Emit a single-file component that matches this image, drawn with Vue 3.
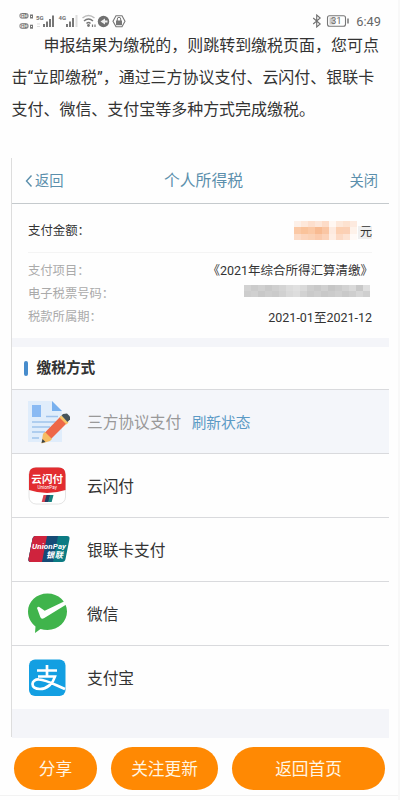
<script setup>
const details = [
  { label: '支付项目：', value: '《2021年综合所得汇算清缴》', kind: 'quoted' },
  { label: '电子税票号码：', value: '', kind: 'masked' },
  { label: '税款所属期：', value: '2021-01至2021-12', kind: 'plain' },
]
const methods = [
  { id: 'agreement', name: '三方协议支付', action: '刷新状态' },
  { id: 'quickpass', name: '云闪付' },
  { id: 'unionpay', name: '银联卡支付' },
  { id: 'wechat', name: '微信' },
  { id: 'alipay', name: '支付宝' },
]
const amountMask = [
  '#fdf0e8', '#fee8da', '#fddfcd', '#fde6d8', '#fddcc8', '#fff7f2', '#fde8da', '#fde2d0', '#fdeadf',
  '#fbc9a6', '#fac39b', '#fbc8a4', '#f8bb92', '#fac6a4', '#fdeadf', '#fcd0b2', '#fbd0b5', '#fef2ea',
  '#fcdcc8', '#fcd5bd', '#fbd2b6', '#fbcbad', '#fcd3ba', '#feeee4', '#fcdac5', '#fde3d3', '#fffaf7',
]
const codeMask = [
  '#d2d2d2', '#cbcbcb', '#d0d0d0', '#c9c9c9', '#cfcfcf', '#d4d4d4', '#dcdcdc', '#e0e0e0', '#dadada', '#cecece', '#c9c9c9', '#d0d0d0', '#c6c6c6', '#cbcbcb', '#d2d2d2', '#d9d9d9', '#c8c8c8', '#dedede',
  '#cdcdcd', '#d0d0d0', '#c8c8c8', '#cdcdcd', '#cacaca', '#d1d1d1', '#d9d9d9', '#dddddd', '#d2d2d2', '#cacaca', '#cecece', '#c8c8c8', '#cbcbcb', '#cfcfcf', '#c9c9c9', '#cecece', '#d6d6d6', '#cfcfcf',
]
</script>

<template>
  <div class="screen">
    <header class="status">
      <svg class="signals" width="112" height="20" viewBox="0 0 112 20">
        <g fill="none" stroke="#777" stroke-width="1">
          <rect x="1" y="4.500" width="8" height="4.600" rx="1.500" />
          <rect x="1" y="14.700" width="8" height="4.600" rx="1.500" />
          <rect x="11.500" y="6" width="2" height="3" />
          <rect x="11.500" y="16.200" width="2" height="3" />
        </g>
        <g class="tiny">
          <text x="2" y="8.700" font-size="4.800">HD</text>
          <text x="2" y="18.900" font-size="4.800">HD</text>
          <text x="17" y="10.500" font-size="6">5G</text>
          <text x="39.500" y="10.500" font-size="6">4G</text>
        </g>
        <g fill="#777">
          <path d="M24 15h2v3h-2zM27 12.500h2V18h-2zM30 10h2v8h-2zM33 6.500h2V18h-2z" />
          <path d="M47 15h2v3h-2zM50 12.500h2V18h-2zM53 9h2v9h-2z" />
        </g>
        <path d="M57.500 6v12" stroke="#ddd" stroke-width="2" />
        <path d="M18 15h3M18 17.500h3" stroke="#ddd" />
        <g fill="none" stroke="#777" stroke-width="1.500">
          <path d="M63.500 9q6-5 12 0" stroke="#bbb" />
          <path d="M65 12q4.500-4 9 0M67.500 14.500q2-2 4 0" />
          <path d="M73.500 15.500v2.500M76 15.500v2.500" stroke-width="1.200" />
        </g>
        <circle cx="69.500" cy="16.500" r="1.400" fill="#777" />
        <circle cx="84.500" cy="12.500" r="5.700" fill="#707070" />
        <path d="M81.500 12.500l4.500-3v2h2.500v2H86v2z" fill="#eee" />
        <path d="M97 6.800h6l3 5.500-3 5.500h-6l-3-5.500z" fill="none" stroke="#777" stroke-width="1.100" />
        <path d="M97 11.500h6v4.700h-6z" fill="#777" />
        <path d="M98.300 12V10a1.700 1.700 0 0 1 3.400 0v2" fill="none" stroke="#777" />
      </svg>
      <div class="power">
        <svg width="40" height="14" viewBox="0 0 40 14">
          <path d="M1.200 4l7 6-3.500 3V1l3.500 3-7 6" fill="none" stroke="#707070" stroke-width="1.100" />
          <rect x="15.500" y="1.800" width="18" height="10.400" rx="2" fill="none" stroke="#777" stroke-width="1.100" />
          <rect x="17.500" y="3.500" width="5" height="7" fill="#c9c9c9" />
          <path d="M36 4.500v5" stroke="#777" stroke-width="1.500" />
          <text class="battery" x="19" y="10.300">31</text>
        </svg>
        <span class="time">6:49</span>
      </div>
    </header>

    <p class="intro">申报结果为缴税的，则跳转到缴税页面，您可点击“立即缴税”，通过三方协议支付、云闪付、银联卡支付、微信、支付宝等多种方式完成缴税。</p>

    <main class="panel">
      <nav class="nav">
        <span class="back">
          <svg width="8" height="12" viewBox="0 0 8 12"><path d="M6.500 .5L1.500 6l5 5.500" fill="none" stroke="#5b8fac" stroke-width="1.400" /></svg>
          返回
        </span>
        <span class="title">个人所得税</span>
        <span class="close">关闭</span>
      </nav>

      <section class="summary">
        <div class="amount">
          <span class="caption">支付金额：</span>
          <span class="sum">
            <span class="mask amount-mask"><i v-for="(c, i) in amountMask" :key="i" :style="{ background: c }" /></span>
            <span class="yuan">元</span>
          </span>
        </div>
        <div v-for="d in details" :key="d.label" class="detail">
          <span class="label">{{ d.label }}</span>
          <span v-if="d.kind === 'masked'" class="mask code-mask"><i v-for="(c, i) in codeMask" :key="i" :style="{ background: c }" /></span>
          <span v-else :class="['value', d.kind]">{{ d.value }}</span>
        </div>
      </section>

      <h2 class="heading"><i class="bar" />缴税方式</h2>

      <ul class="methods">
        <li v-for="m in methods" :key="m.id" :class="['method', m.id]">
          <svg v-if="m.id === 'agreement'" class="icon" viewBox="0 0 44 44">
            <path d="M0 1h24l10 10v31H0z" fill="#e0edfb" />
            <path d="M24 1v10h10z" fill="#78b0ee" />
            <path d="M4 5h9v12H4z" fill="#8abaf3" />
            <path d="M18 16.500h12M4 22h24M4 27h18M4 32h13M4 38h7" stroke="#9fc3ec" stroke-width="1.300" />
            <path d="M15.500 34L33 16l6.500 6.500L22 40z" fill="#ee6848" />
            <path d="M15 34l2-2 7 7-2 2-8.500 2.500z" fill="#f6bd62" />
            <path d="M13.500 43l1-4 3 3z" fill="#384247" />
            <path d="M31.500 17.500l2-2 7 7-2 2z" fill="#f7c567" />
            <path d="M33.500 15.500l1.500-1.500 4-.5 3 3v3l-2.500 2.500z" fill="#46545a" />
          </svg>
          <svg v-else-if="m.id === 'quickpass'" class="icon" viewBox="0 0 44 44">
            <rect x="1" y="3.500" width="36.500" height="36.500" rx="7" fill="#fff" stroke="#ddd" stroke-width=".8" />
            <path d="M1 26V10.500q0-7 7-7h22.500q7 0 7 7V26q-18.500 6-36.500 0z" fill="#e22c30" />
            <text class="cn" x="19.200" y="19" font-size="10.600" text-anchor="middle">云闪付</text>
            <text class="en thin" x="19.200" y="25" font-size="4.600" text-anchor="middle">UnionPay</text>
            <path d="M15.500 31h4l-1.800 7h-4z" fill="#d74350" />
            <path d="M18.500 31h4l-1.800 7h-4z" fill="#233f63" />
            <path d="M22 31h3.500l-1.800 7h-3.500z" fill="#16817f" />
          </svg>
          <svg v-else-if="m.id === 'unionpay'" class="icon" viewBox="0 0 44 44">
            <path d="M8 8h31q3 0 2.500 3l-4 20q-.5 3-3.500 3H3q-3 0-2.500-3l4-20Q5 8 8 8z" fill="#0b7b83" />
            <path d="M8 8h22l-5 26H3q-3 0-2.500-3l4-20Q5 8 8 8z" fill="#164b76" />
            <path d="M8 8h11l-5 26H3q-3 0-2.500-3l4-20Q5 8 8 8z" fill="#cf233d" />
            <text class="en" x="4" y="21" font-size="8" textLength="34">UnionPay</text>
            <text class="cn slant" x="18" y="30.300" font-size="8.200" textLength="17">银联</text>
          </svg>
          <svg v-else-if="m.id === 'wechat'" class="icon" viewBox="0 0 44 44">
            <path d="M19.500 1.500c11 0 19.500 8 19.500 18s-8.500 18.500-19.500 18.500q-3.500 0-7-1l-5.500 4 .5-6.500C3 31 0 25.500 0 19.500c0-10 8.500-18 19.500-18z" fill="#40b44c" />
            <path d="M9 16q1.200-2 2.700-.8l5 3.500L36.500 9.200l1.800 3.300-22 13.500q-3 2-4-1z" fill="#fff" />
          </svg>
          <svg v-else class="icon" viewBox="0 0 44 44">
            <rect x="1" y="3.500" width="36.500" height="36.500" rx="6" fill="#139fe2" />
            <path d="M9 14.500h20M19 9v11M10 20.500h17c-2 7-8 12.500-15 12.500-5 0-7.500-2-7.500-5 0-3 3-4.800 6.500-4.500 8 .5 16 5.500 26 9.500" fill="none" stroke="#fff" stroke-width="2.700" />
          </svg>
          <span class="name">{{ m.name }}</span>
          <span v-if="m.action" class="action">{{ m.action }}</span>
        </li>
      </ul>
      <div class="filler" />
    </main>

    <footer class="actions">
      <button class="share">分享</button>
      <button class="follow">关注更新</button>
      <button class="home">返回首页</button>
    </footer>
  </div>
</template>

<style>
body { margin: 0; background: #fdfdfd; }
</style>

<style scoped>
* { box-sizing: border-box; }
.screen {
  width: 400px;
  height: 800px;
  overflow: hidden;
  display: flex;
  flex-direction: column;
  background: #fefefe;
  border-right: 2px solid #f8f8f8;
  color: #333;
  font-family: Roboto, "Noto Sans CJK SC", sans-serif;
}
.status {
  height: 30px;
  padding: 9px 17px 0 19px;
  display: flex;
  justify-content: space-between;
  flex: none;
}
.tiny { fill: #707070; font-weight: 700; }
.power { display: flex; gap: 4px; padding-top: 5px; height: 19px; align-items: flex-start; }
.battery { font-size: 9.500px; fill: #666; }
.time { font-size: 12.800px; line-height: 15px; color: #666; }
.intro {
  margin: 0;
  padding-left: 11.500px;
  width: 384px;
  height: 128px;
  flex: none;
  font-size: 15.970px;
  line-height: 32px;
  text-indent: 32px;
  color: #333;
}
.panel {
  width: 378px;
  height: 579px;
  margin-left: 11px;
  flex: none;
  border-left: 1px solid #ddd;
}
.nav {
  height: 46px;
  padding: 0 11px 0 13px;
  border-bottom: 1px solid #c5cacd;
  display: grid;
  grid-template-columns: 1fr auto 1fr;
  align-items: center;
  color: #5b8fac;
  font-size: 14.300px;
  line-height: 46px;
}
.back { display: flex; align-items: center; gap: 2px; }
.title { font-size: 15.800px; padding-left: 4px; }
.close { text-align: right; }
.summary {
  height: 134px;
  padding: 0 17px 0 16px;
  font-size: 12.500px;
}
.amount {
  height: 49px;
  padding-top: 5px;
  margin-bottom: 5px;
  border-bottom: 1px solid #f4f4f4;
  display: flex;
  justify-content: space-between;
  align-items: center;
}
.caption { font-size: 12.400px; margin-top: -1px; }
.sum { display: flex; align-items: center; gap: 1px; }
.mask { display: grid; }
.amount-mask { grid-template-columns: repeat(9, 7px); grid-auto-rows: 6.300px; }
.yuan { font-size: 12px; line-height: 13px; padding-left: 2px; background: #efefef; margin-top: 5px; }
.detail { height: 23.400px; display: flex; justify-content: space-between; align-items: center; }
.label { color: #aaa; font-size: 12.300px; }
.code-mask { grid-template-columns: repeat(18, 7px); grid-auto-rows: 6px; margin: -5px 2px 0 0; }
.quoted { margin-right: -1px; }
.heading {
  height: 51px;
  margin: 0;
  padding-left: 12px;
  border-top: 9px solid #f4f5f9;
  display: flex;
  align-items: center;
  gap: 8.500px;
  font-size: 14.700px;
  font-weight: 700;
  line-height: 20px;
}
.bar { width: 4px; height: 15px; border-radius: 2px; background: #478ccc; }
.methods { margin: 0; padding: 0; list-style: none; }
.method {
  height: 64px;
  padding-left: 16px;
  border-top: 1px solid #d9dadd;
  display: flex;
  align-items: center;
  font-size: 15.700px;
}
.agreement { background: #f4f6fa; }
.agreement .name { color: #999; }
.icon { width: 44px; height: 44px; margin-right: 15px; flex: none; }
.action { margin-left: 10.500px; font-size: 14.700px; color: #5b9ac5; }
.cn { fill: #fff; font-weight: 700; }
.en { fill: #fff; font-weight: 700; font-style: italic; }
.thin { font-weight: 400; font-style: normal; }
.slant { font-style: italic; }
.filler { height: 29px; background: #f4f5f9; }
.actions {
  height: 59px;
  flex: none;
  padding: 10px 13px 5px 14px;
  display: flex;
  border-bottom: 1px solid #f2f2f2;
}
button {
  height: 43px;
  padding: 0 0 2px;
  border: 0;
  border-radius: 22px;
  background: #ff8903;
  color: #fff6e4;
  font: 16.700px Roboto, "Noto Sans CJK SC", sans-serif;
}
.share { width: 83px; }
.follow { width: 107px; margin: 0 14px; }
.home { width: 153px; }
</style>
